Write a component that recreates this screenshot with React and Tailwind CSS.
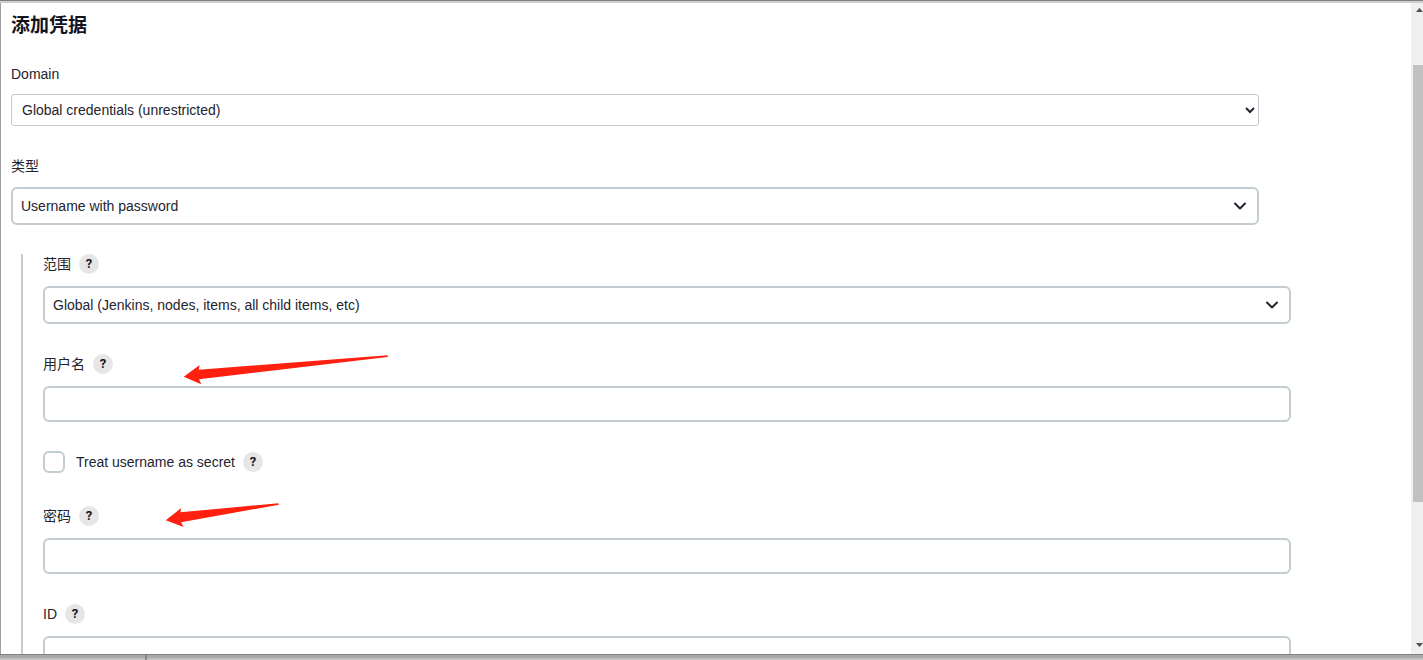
import React from 'react';
import { ChevronDown } from 'lucide-react';

const fieldBox = "w-full rounded-[6px] border-2 border-[#c3cdd1] bg-white px-2 text-[#24242e]";

const Help = ({ topic }) => (
  <button type="button" aria-label={`Help for ${topic}`} className="flex h-5 w-5 items-center justify-center rounded-full bg-[#e6e6e6] font-[Roboto,sans-serif] text-[13px] font-bold leading-5 text-[#14141f]">
    ?
  </button>
);

const FieldLabel = ({ id, text }) => (
  <div className="mb-3 flex h-5 items-center gap-2">
    <label htmlFor={id} className="leading-5">{text}</label>
    <Help topic={text} />
  </div>
);

const Dropdown = ({ id, option }) => (
  <div className="relative">
    <select id={id} className={`${fieldBox} block h-[38px] appearance-none`}>
      <option>{option}</option>
    </select>
    <ChevronDown size={20} strokeWidth={2.4} color="#24242e" className="pointer-events-none absolute right-[9px] top-[9px]" />
  </div>
);

// red marker pointing at a field that has to be filled in
const Arrow = ({ className, viewBox, points }) => (
  <svg className={className} viewBox={viewBox} fill="#ff2010" aria-hidden="true">
    <polygon points={points} />
  </svg>
);

const CredentialForm = () => (
  <form className="min-w-0 flex-1 overflow-hidden border-l border-[#a0a0a0] bg-white pl-[10px] pr-[152px] pt-[9px]">
    <h1 className="mb-6 text-[19px] font-bold leading-7 text-[#14141f]">添加凭据</h1>

    <label htmlFor="domain" className="mb-[10px] block leading-5">Domain</label>
    <select id="domain" className="mb-[30px] block h-8 w-full rounded-[3px] border border-[#c3cdd1] bg-white px-[6px]">
      <option>Global credentials (unrestricted)</option>
    </select>

    <label htmlFor="kind" className="mb-[11px] block leading-5">类型</label>
    <Dropdown id="kind" option="Username with password" />

    <div className="-mr-8 ml-[10px] mt-[29px] border-l-2 border-[#c3cdd1] pl-5">
      <div className="mb-[30px]">
        <FieldLabel id="scope" text="范围" />
        <Dropdown id="scope" option="Global (Jenkins, nodes, items, all child items, etc)" />
      </div>

      <div className="relative mb-[30px]">
        <FieldLabel id="username" text="用户名" />
        <input id="username" type="text" className={`${fieldBox} block h-9`} />
        <Arrow
          className="absolute left-[140px] top-0 h-8 w-[206px]"
          viewBox="0 0 206 32"
          points="0.7,22.7 16.7,11 15.7,15.7 204.7,1.3 204.7,3 16,25.3 18.3,30.3"
        />
      </div>

      <div className="mb-[34px] flex h-5 items-center">
        <input id="secret" type="checkbox" className="h-[22px] w-[22px] appearance-none rounded-[6px] border-2 border-[#c3cdd1] bg-white" />
        <label htmlFor="secret" className="ml-[11px] mr-2 leading-5">Treat username as secret</label>
        <Help topic="Treat username as secret" />
      </div>

      <div className="relative mb-[30px]">
        <FieldLabel id="password" text="密码" />
        <input id="password" type="password" className={`${fieldBox} block h-9`} />
        <Arrow
          className="absolute -top-1 left-[122px] h-7 w-[116px]"
          viewBox="0 0 116 28"
          points="0.7,18.3 16.3,6 15.3,10.3 113.3,1.3 114,2.7 16,20.3 18.7,25"
        />
      </div>

      <FieldLabel id="credential-id" text="ID" />
      <input id="credential-id" type="text" className={`${fieldBox} block h-9`} />
    </div>
  </form>
);

const Scrollbar = () => (
  <div className="flex w-3 shrink-0 flex-col bg-[#f0f0f0] pl-[2px]" aria-hidden="true">
    <svg viewBox="0 0 10 62" className="h-[62px] w-[10px]" fill="#505050">
      <path d="M3 9 L6.500 5 L10 9 Z" />
    </svg>
    <div className="flex-[437] bg-[#c1c1c1]" />
    <div className="flex flex-[152] flex-col justify-end">
      <svg viewBox="0 0 10 12" className="h-3 w-[10px]" fill="#505050">
        <path d="M3 1 L6.500 5 L10 1 Z" />
      </svg>
    </div>
  </div>
);

const App = () => {
  return (
    <div className="flex h-screen flex-col overflow-hidden bg-white font-['Liberation_Sans','Noto_Sans_CJK_SC',sans-serif] text-[14px] text-[#24242e]">
      <div className="h-[3px] shrink-0 border-t border-[#808080] bg-[#cfcfcf]" />
      <div className="flex min-h-0 flex-1">
        <CredentialForm />
        <Scrollbar />
      </div>
      <div className="flex h-[6px] shrink-0 border-t border-[#808080] bg-[#a9a9a9]">
        <div className="w-[145px] border-b-2 border-[#c0c0c0]" />
        <div className="w-[2px] bg-[#808890]" />
        <div className="flex-1 border-b-2 border-[#c0c0c0]" />
      </div>
    </div>
  );
};

export default App;
